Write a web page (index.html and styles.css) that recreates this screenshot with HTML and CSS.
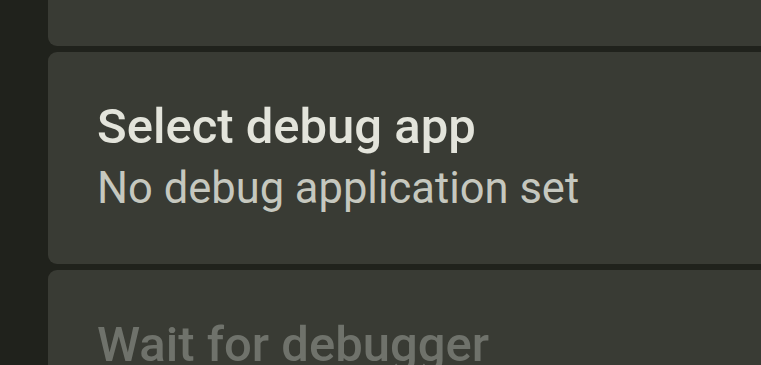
FILE: index.html
```html
<!DOCTYPE html>
<html lang="en">
<head>
  <meta charset="UTF-8" />
  <meta name="viewport" content="width=device-width, initial-scale=1.0"/>
  <title>Developer options</title>
  <link rel="stylesheet" href="styles.css">
</head>
<body>
  <div class="rail"></div>
  <div class="prefs">
    <!-- previous entry, scrolled mostly out of view -->
    <div class="pref pref-above"></div>

    <div class="pref">
      <div class="pref-title">Select debug app</div>
      <div class="pref-summary">No debug application set</div>
    </div>

    <div class="pref disabled">
      <div class="pref-title">Wait for debugger</div>
    </div>
  </div>
</body>
</html>
```

FILE: styles.css
```css
:root {
  --bg-color: #20221c;
  --card-bg: #393b34;
  --title-color: #e3e4db;
  --summary-color: #c6c8bf;
  --disabled-color: #6f726b;
}

body {
  margin: 0;
  height: 100vh;
  overflow: hidden;
  background-color: var(--bg-color);
  font-family: Roboto, 'Noto Sans', sans-serif;
  display: flex;
}

.rail {
  width: 48px;
  flex-shrink: 0;
}

.prefs {
  flex: 1;
  margin-right: -24px;
  display: flex;
  flex-direction: column;
  gap: 6px;
}

.pref {
  height: 212px;
  flex-shrink: 0;
  box-sizing: border-box;
  padding: 46px 49px 0;
  background-color: var(--card-bg);
  border-radius: 9px;
}

.pref-above {
  height: 45px;
  border-radius: 0 0 9px 9px;
}

.pref-title {
  font-size: 49px;
  line-height: 58px;
  font-weight: 500;
  color: var(--title-color);
  white-space: nowrap;
}

.pref-summary {
  margin-top: 4px;
  font-size: 43.5px;
  line-height: 58px;
  color: var(--summary-color);
  white-space: nowrap;
}

.pref.disabled .pref-title {
  color: var(--disabled-color);
}
```
